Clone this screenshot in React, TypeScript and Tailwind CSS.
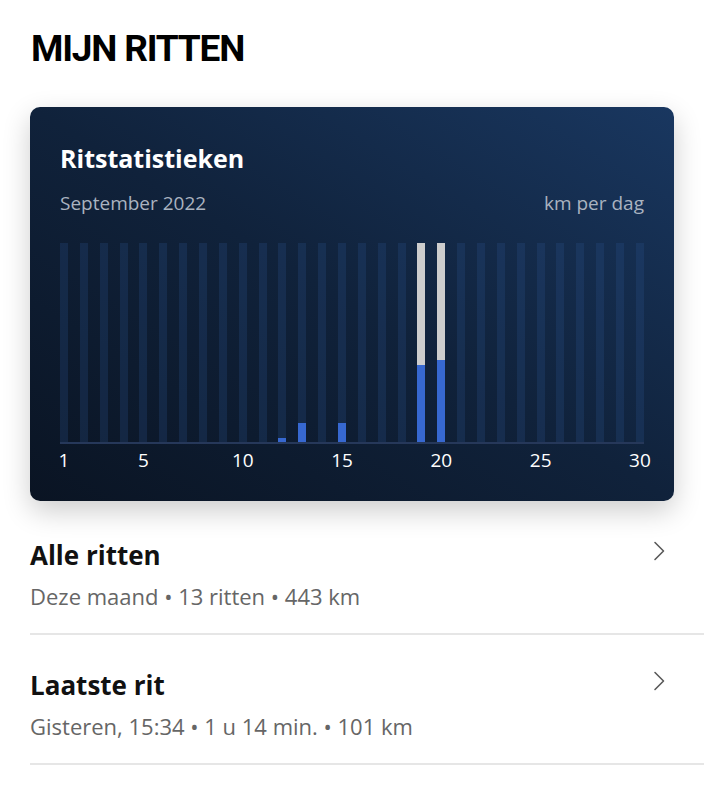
// km per day for September; grey part is the remaining height on long rides
const days: { blue: number; grey?: boolean }[] = Array.from({ length: 30 }, () => ({ blue: 0 }))
days[11] = { blue: 4 }
days[12] = { blue: 19 }
days[14] = { blue: 19 }
days[18] = { blue: 77, grey: true }
days[19] = { blue: 82, grey: true }

const labels: Record<number, string> = { 0: '1', 4: '5', 9: '10', 14: '15', 19: '20', 24: '25', 29: '30' }

function RideRow({ title, sub }: { title: string; sub: string }) {
  return (
    <div className="ml-[30px] pr-[38px] pt-[37px] pb-[26px] border-b-2 border-[#e6e6e6]">
      <div className="flex items-start justify-between">
        <h2 className="text-[26px] leading-none font-bold text-[#111]">{title}</h2>
        <svg width="13" height="20" viewBox="0 0 13 20" className="mt-[-1px] text-[#5a5a5a]">
          <path d="M2 1.5 L10.5 10 L2 18.5" fill="none" stroke="currentColor" strokeWidth="1.6" strokeLinecap="round" strokeLinejoin="round" />
        </svg>
      </div>
      <p className="mt-[17px] text-[22px] leading-none text-[#666]">{sub}</p>
    </div>
  )
}

export default function App() {
  return (
    <div className="min-h-[800px] w-[704px] bg-white font-['Open_Sans',sans-serif]">
      <h1 className="pl-[31px] pt-[30px] text-[37px] leading-none font-bold tracking-[-1.2px] text-black font-['Roboto',sans-serif]">
        MIJN RITTEN
      </h1>

      {/* Stats card */}
      <div className="mx-[30px] mt-[40px] h-[394px] rounded-[10px] bg-linear-to-tr from-[#0a1423] via-[#10223b] to-[#193760] px-[30px] pt-[39px] shadow-[0_10px_28px_rgba(0,0,0,0.2)]">
        <h3 className="text-[25px] leading-none font-bold text-white">Ritstatistieken</h3>
        <div className="mt-[23px] flex items-center justify-between text-[19px] leading-none text-[#aab3c0]">
          <span>September 2022</span>
          <span>km per dag</span>
        </div>

        <div className="mt-[30px] flex h-[201px] items-stretch justify-between border-b-2 border-[#26385a]">
          {days.map((d, i) => (
            <div key={i} className="flex w-[8px] flex-col justify-end bg-[#2a5490]/25">
              {d.grey && <div className="flex-1 bg-[#cdcdcd]" />}
              {d.blue > 0 && <div className="bg-[#3768d0]" style={{ height: d.blue }} />}
            </div>
          ))}
        </div>

        <div className="mt-[7px] flex justify-between">
          {days.map((_, i) => (
            <div key={i} className="flex w-[8px] justify-center">
              <span className="whitespace-nowrap text-[19px] leading-none text-white">{labels[i] ?? ''}</span>
            </div>
          ))}
        </div>
      </div>

      <div className="pt-[4px]">
        <RideRow title="Alle ritten" sub="Deze maand • 13 ritten • 443 km" />
        <RideRow title="Laatste rit" sub="Gisteren, 15:34 • 1 u 14 min. • 101 km" />
      </div>
    </div>
  )
}
